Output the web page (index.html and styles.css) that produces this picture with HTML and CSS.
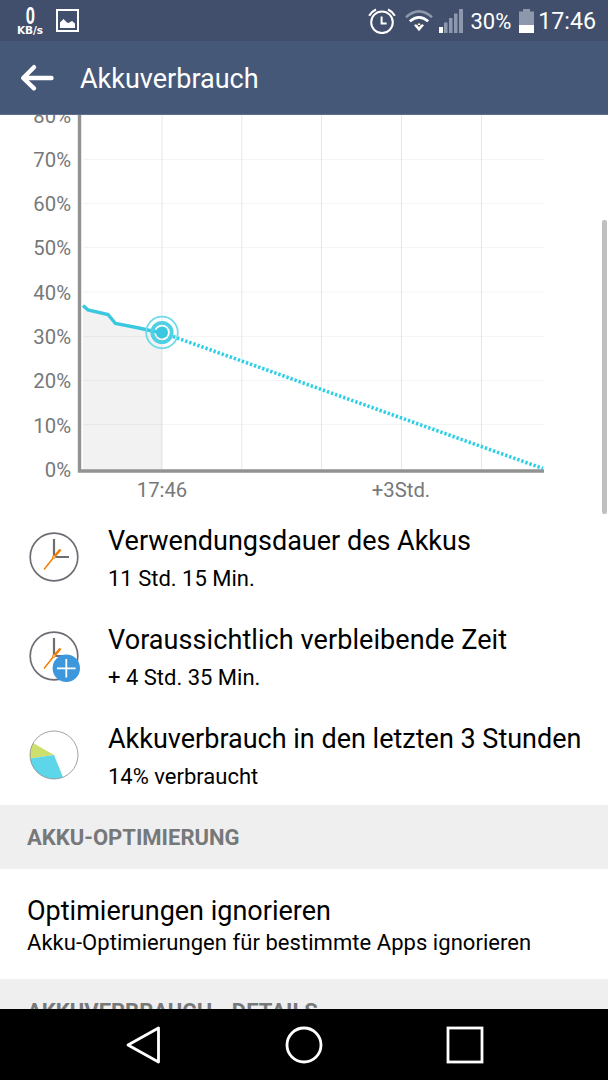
FILE: index.html
```
<!DOCTYPE html>
<html lang="de">
<head>
    <meta charset="UTF-8">
    <meta name="viewport" content="width=device-width, initial-scale=1.0">
    <title>Akkuverbrauch</title>
    <link rel="stylesheet" href="styles.css">
</head>
<body>
    <!-- Statusleiste -->
    <div class="status-bar">
        <div class="speed">
            <span class="speed-value">0</span>
            <span class="speed-unit">KB/s</span>
        </div>
        <svg class="icon-picture" width="23" height="23" viewBox="0 0 23 23">
            <rect x="1" y="1" width="21" height="21" fill="none" stroke="#fff" stroke-width="2"/>
            <path d="M4 19v-5.500L7.500 10l3.500 3.500 1.500.5 3.500-2 3 2.500V19z" fill="#fff"/>
        </svg>
        <div class="status-right">
            <svg width="28" height="26" viewBox="0 0 28 26" fill="none" stroke="#fff" stroke-width="2">
                <circle cx="14" cy="14.300" r="10.800"/>
                <path d="M13.600 8.500v7h5"/>
                <path d="M1.200 7.800Q3.500 3.500 8 1.500M26.800 7.800Q24.500 3.500 20 1.500" stroke-width="2.300"/>
            </svg>
            <svg class="icon-wifi" width="28" height="22" viewBox="0 0 28 22" fill="none" stroke-width="2.600">
                <path d="M1 7.300Q14-4.500 27 7.300" stroke="#8e98ac"/>
                <path d="M4.800 11.300Q14 3.300 23.200 11.300" stroke="#fff"/>
                <path d="M9 15.300Q14 11.200 19 15.300L14 21.300z" fill="#fff"/>
                <path d="M10 12.800h8L14 18z" fill="#4b4b4b"/>
                <path d="M11.500 15.300l2.500 3.200 2.500-3.200M12.800 14.300h2.400" stroke="#fff" stroke-width="1.500"/>
            </svg>
            <svg class="icon-signal" width="24" height="24" viewBox="0 0 24 24" fill="#8e98ac">
                <rect x="0" y="18" width="4" height="6" fill="#fff"/>
                <rect x="5" y="13.500" width="3.500" height="10.500"/>
                <rect x="10" y="9" width="3.500" height="15"/>
                <rect x="15" y="4.500" width="3.500" height="19.500"/>
                <rect x="20" y="0" width="4" height="24"/>
            </svg>
            <span class="percent">30%</span>
            <svg class="icon-battery" width="15" height="24" viewBox="0 0 15 24">
                <path d="M4 0h7v2.500h4V24H0V2.500h4z" fill="#8e98ac"/>
                <rect x="0" y="16" width="15" height="8" fill="#fff"/>
            </svg>
            <span class="time">17:46</span>
        </div>
    </div>

    <header>
        <svg width="34" height="28" viewBox="0 0 34 28" fill="none" stroke="#fff" stroke-width="4.400" stroke-linecap="round" stroke-linejoin="round">
            <path d="M14 3.200L3.200 14 14 24.300M4 14h27.500"/>
        </svg>
        <h1>Akkuverbrauch</h1>
    </header>

    <main>
        <!-- Verlauf des Akkustands -->
        <svg class="chart" width="608" height="395" viewBox="0 115 608 395">
            <path d="M83 159.500H544M83 203.500H544M83 247.500H544M83 292H544M83 336.500H544M83 380.500H544M83 424.500H544" stroke="#f4f4f4"/>
            <path d="M162 115V469M241.800 115V469M321.500 115V469M401.500 115V469M481.500 115V469" stroke="#e6e6e6"/>
            <path d="M83 306L88 310 108 314.500 115.500 323.500 139 328 152 331 162 332V469H83z" fill="#000" fill-opacity=".05"/>
            <path d="M79.500 115V471H544" fill="none" stroke="#919292" stroke-width="3.400"/>
            <path d="M83 305.500L88 310 108 314.500 115.500 323.500 139 328 152 331 162 332.300" fill="none" stroke="#39c8df" stroke-width="3.400"/>
            <path d="M173 336.500L543 468.500" stroke="#2fd0e6" stroke-width="3.600" stroke-dasharray="2.400 1.900"/>
            <g fill="none" stroke="#39c8df">
                <circle cx="162" cy="332.500" r="15.800" stroke="#6fdaea" stroke-width="1.800"/>
                <circle cx="162" cy="332.500" r="9.700" stroke="#4fd0e4" stroke-width="3.800"/>
                <circle cx="162" cy="332.500" r="6" fill="#39c8df" stroke="none"/>
            </g>
            <g class="axis-y">
                <text x="71" y="123">80%</text>
                <text x="71" y="167">70%</text>
                <text x="71" y="211">60%</text>
                <text x="71" y="255">50%</text>
                <text x="71" y="300">40%</text>
                <text x="71" y="344">30%</text>
                <text x="71" y="388">20%</text>
                <text x="71" y="433">10%</text>
                <text x="71" y="477">0%</text>
            </g>
            <g class="axis-x">
                <text x="162" y="497">17:46</text>
                <text x="401" y="497">+3Std.</text>
            </g>
        </svg>

        <ul class="stats">
            <li>
                <svg width="52" height="52" viewBox="0 0 52 52" fill="none">
                    <circle cx="26" cy="26" r="23.800" stroke="#6c6e74" stroke-width="1.700"/>
                    <path d="M26 8v18h15" stroke="#6c6e74" stroke-width="2.200"/>
                    <path d="M16 38.500L26 26" stroke="#f57c00" stroke-width="1.400"/>
                    <path d="M26 26l6.500-7.500" stroke="#f57c00" stroke-width="2.600"/>
                    <circle cx="26" cy="26" r="1.300" fill="#fff" stroke="#f57c00"/>
                </svg>
                <div>
                    <h2>Verwendungsdauer des Akkus</h2>
                    <p>11 Std. 15 Min.</p>
                </div>
            </li>
            <li>
                <svg width="52" height="52" viewBox="0 0 52 52" fill="none">
                    <circle cx="26" cy="26" r="23.800" stroke="#6c6e74" stroke-width="1.700"/>
                    <path d="M26 8v18h15" stroke="#6c6e74" stroke-width="2.200"/>
                    <path d="M16 38.500L26 26" stroke="#f57c00" stroke-width="1.400"/>
                    <path d="M26 26l6.500-7.500" stroke="#f57c00" stroke-width="2.600"/>
                    <circle cx="26" cy="26" r="1.300" fill="#fff" stroke="#f57c00"/>
                    <circle cx="38.300" cy="38.300" r="13.700" fill="#3d97dc"/>
                    <path d="M29 38.300h18.600M38.300 29v18.600" stroke="#fff" stroke-width="1.800"/>
                </svg>
                <div>
                    <h2 class="wide">Voraussichtlich verbleibende Zeit</h2>
                    <p>+ 4 Std. 35 Min.</p>
                </div>
            </li>
            <li>
                <svg width="52" height="52" viewBox="0 0 52 52">
                    <path d="M26 26L2.200 29.400A24 24 0 0 1 5.200 14z" fill="#cde06d"/>
                    <path d="M26 26L35 48.300A24 24 0 0 1 2.200 29.400z" fill="#5cd6e8"/>
                    <circle cx="26" cy="26" r="24" fill="none" stroke="#8a8a90" stroke-width=".8"/>
                </svg>
                <div>
                    <h2>Akkuverbrauch in den letzten 3 Stunden</h2>
                    <p>14% verbraucht</p>
                </div>
            </li>
        </ul>

        <h3 class="section-title">AKKU-OPTIMIERUNG</h3>
        <div class="entry">
            <h2>Optimierungen ignorieren</h2>
            <p>Akku-Optimierungen für bestimmte Apps ignorieren</p>
        </div>
        <h3 class="section-title">AKKUVERBRAUCH - DETAILS</h3>
        <div class="scrollbar"></div>
    </main>

    <!-- Navigationsleiste -->
    <nav>
        <svg width="40" height="40" viewBox="0 0 40 40">
            <path d="M35.500 3v34L5 20z" stroke-linejoin="round"/>
        </svg>
        <svg width="40" height="40" viewBox="0 0 40 40">
            <circle cx="20" cy="20" r="17"/>
        </svg>
        <svg width="40" height="40" viewBox="0 0 40 40">
            <rect x="3" y="3" width="34" height="34"/>
        </svg>
    </nav>
</body>
</html>
```
FILE: styles.css
```
* {
    box-sizing: border-box;
}
body {
    display: flex;
    flex-direction: column;
    height: 1080px;
    margin: 0;
    overflow: hidden;
    background: #fff;
    color: #000;
    font-family: Roboto, "Liberation Sans", sans-serif;
}
svg {
    display: block;
    flex: none;
}
h1, h2, h3, p {
    margin: 0;
    font-weight: normal;
    white-space: nowrap;
}
.status-bar {
    display: flex;
    align-items: center;
    flex: none;
    height: 41px;
    padding: 0 12px 0 16px;
    background: #414f6c;
    color: #fff;
}
.speed {
    display: flex;
    flex-direction: column;
    align-items: center;
    width: 28px;
    font-family: "DejaVu Sans", sans-serif;
    font-weight: bold;
}
.speed-value {
    font-family: "Liberation Sans", sans-serif;
    font-size: 23px;
    line-height: 20px;
    transform: scaleX(.72);
}
.speed-unit {
    font-size: 10.5px;
    line-height: 9px;
}
.icon-picture {
    margin-left: 12px;
}
.status-right {
    display: flex;
    align-items: center;
    margin-left: auto;
}
.icon-wifi {
    margin-left: 9px;
}
.icon-signal {
    margin-left: 6px;
}
.percent {
    margin-left: 7px;
    padding-top: 1px;
    font-size: 22px;
}
.icon-battery {
    margin-left: 8px;
}
.time {
    margin-left: 4px;
    padding-top: 1px;
    font-size: 23.2px;
}
header {
    display: flex;
    align-items: center;
    flex: none;
    height: 74px;
    padding-left: 20px;
    background: #465878;
    border-bottom: 1px solid #5d6e8d;
    color: #fff;
}
header h1 {
    margin-left: 26px;
    padding-top: 2px;
    font-size: 27px;
}
main {
    position: relative;
    flex: 1;
    min-height: 0;
    overflow: hidden;
}
.chart text {
    fill: #76787a;
    font-size: 20.3px;
}
.axis-y {
    text-anchor: end;
}
.axis-x {
    text-anchor: middle;
}
.stats {
    margin: 0;
    padding: 0;
    list-style: none;
}
.stats li {
    display: flex;
    gap: 28px;
    height: 99px;
    padding: 21px 0 0 28px;
}
.stats li div {
    margin-top: -7px;
}
h2 {
    font-size: 27px;
    line-height: 34px;
}
.wide {
    letter-spacing: .08px;
}
p {
    font-size: 22px;
    line-height: 26px;
}
.stats p {
    margin-top: 8px;
}
.section-title {
    height: 64px;
    padding-left: 27px;
    background: #efefef;
    color: #76787a;
    font-size: 22px;
    font-weight: bold;
    line-height: 66px;
}
.stats + .section-title {
    margin-top: -2px;
}
.entry {
    height: 110px;
    padding: 25px 27px 0;
}
.entry p {
    margin-top: 2px;
    letter-spacing: .05px;
}
/* liegt über dem Inhalt */
.scrollbar {
    position: absolute;
    top: 105px;
    right: 1px;
    width: 5px;
    height: 294px;
    border-radius: 2px;
    background: #c0c0c0;
}
nav {
    display: flex;
    align-items: center;
    justify-content: center;
    gap: 121px;
    flex: none;
    height: 71px;
    background: #000;
}
nav svg {
    fill: none;
    stroke: #fff;
    stroke-width: 2.8;
}
```
